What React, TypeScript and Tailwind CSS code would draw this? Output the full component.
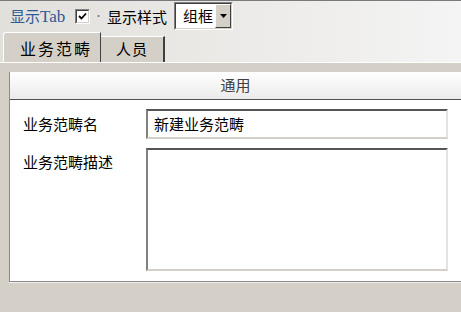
import React from 'react';

const font = { fontFamily: '"Noto Sans CJK SC", "Liberation Sans", sans-serif' };

function Check() {
  return (
    <div className="w-[15px] h-[15px] border-t border-l border-[#808080] border-r border-b border-r-white border-b-white">
      <div className="w-[13px] h-[13px] bg-white border-t border-l border-[#404040] border-r border-b border-r-[#d4d0c8] border-b-[#d4d0c8] flex items-center justify-center">
        <svg width="9" height="9" viewBox="0 0 9 9">
          <path d="M1 4 L3.5 6.5 L8 1.5" fill="none" stroke="#000" strokeWidth="1.8" />
        </svg>
      </div>
    </div>
  );
}

function Select() {
  return (
    <div className="w-[59px] h-[28px] bg-white border-t border-l border-[#808080] border-r border-b border-r-white border-b-white">
      <div className="h-full flex border-t border-l border-[#404040] border-r border-b border-r-[#d4d0c8] border-b-[#d4d0c8]">
        <span className="flex-1 pl-[7px] text-[15px] leading-[24px] text-black overflow-hidden whitespace-nowrap">组框</span>
        <div className="w-[16px] h-full bg-[#d4d0c8] border-t border-l border-white border-r border-b border-r-[#404040] border-b-[#404040] flex items-center justify-center">
          <svg width="7" height="4" viewBox="0 0 7 4">
            <path d="M0 0 H7 L3.5 4 Z" fill="#000" />
          </svg>
        </div>
      </div>
    </div>
  );
}

function Sunken({ className, children }: { className?: string; children?: React.ReactNode }) {
  return (
    <div className={`border-t-2 border-l-2 border-t-[#555555] border-l-[#808080] border-r-2 border-b-2 border-r-[#e4e2dd] border-b-[#d4d0c8] bg-white ${className ?? ''}`}>
      {children}
    </div>
  );
}

export default function App() {
  return (
    <div className="w-[461px] h-[312px] overflow-hidden flex flex-col bg-[#d4d0c8]" style={font}>
      {/* Toolbar + tab strip */}
      <div className="border-t border-[#7a7a7a] bg-gradient-to-r from-[#e2e0db] to-[#f4f4f4]">
        <div className="h-[30px] flex items-center pl-[10px]">
          <span className="w-[50px] text-[15px] text-[#2d5a96] leading-none whitespace-nowrap">
            显示<span className="text-[17px]" style={{ fontFamily: '"Liberation Serif", serif' }}>Tab</span>
          </span>
          <div className="ml-[15px]">
            <Check />
          </div>
          <span className="w-[17px] text-center text-[10px] text-[#808080] leading-none">·</span>
          <span className="w-[60px] text-[15px] text-black leading-none whitespace-nowrap">显示样式</span>
          <div className="ml-[7px]">
            <Select />
          </div>
        </div>
        <div className="h-[31px] flex items-end pl-[3px]">
          <div className="w-[98px] h-[30px] bg-[#d4d0c8] border-t border-l border-white rounded-tl-[3px] border-r border-r-[#404040] flex items-center justify-center pl-[8px] text-[16px] tracking-[2px] text-black">
            业务范畴
          </div>
          <div className="w-[64px] h-[26px] bg-[#d4d0c8] border-t border-white border-r-2 border-r-[#404040] flex items-center justify-center text-[15px] tracking-[1px] text-black">
            人员
          </div>
        </div>
      </div>

      {/* Tab panel */}
      <div className="flex-1 border-t border-white flex">
        <div className="w-[1px] bg-[#ebe9e5] mt-[1px]" />
        <div className="w-[1px]" />
        <div className="w-[1px] bg-white" />
        <div className="pl-[9px] pt-[9px]">
          <div className="w-[452px] border-l border-l-[#8a8a8a] border-b border-b-[#8a8a8a] shadow-[0_1px_0_#f0efec] flex flex-col">
            <div className="h-[28px] bg-gradient-to-b from-[#ffffff] to-[#ebebeb] border-b border-[#505050] flex items-center justify-center text-[15px] text-[#404040]">
              通用
            </div>
            <div className="bg-white pl-[13px] pr-[13px] pt-[9px] pb-[10px] grid grid-cols-[123px_1fr] gap-y-[9px]">
              <div className="h-[30px] flex items-center text-[15px] text-black">业务范畴名</div>
              <Sunken className="h-[30px] flex items-center pl-[6px] text-[15px] text-black">新建业务范畴</Sunken>
              <div className="pt-[4px] text-[15px] leading-[20px] text-black">业务范畴描述</div>
              <Sunken className="h-[123px]" />
            </div>
          </div>
        </div>
      </div>
    </div>
  );
}
